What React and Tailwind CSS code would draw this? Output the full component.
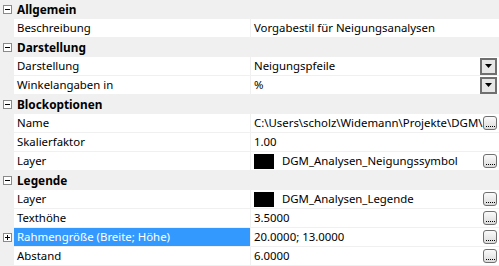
import React from "react";

const rows = [
  { type: "group", label: "Allgemein" },
  { label: "Beschreibung", value: "Vorgabestil für Neigungsanalysen" },
  { type: "group", label: "Darstellung" },
  { label: "Darstellung", value: "Neigungspfeile", button: "drop" },
  { label: "Winkelangaben in", value: "%", button: "drop" },
  { type: "group", label: "Blockoptionen" },
  { label: "Name", value: "C:\\Users\\scholz\\Widemann\\Projekte\\DGM\\Blöcke\\Neigungspfeil.dwg", button: "dots" },
  { label: "Skalierfaktor", value: "1.00" },
  { label: "Layer", value: "DGM_Analysen_Neigungssymbol", swatch: true, button: "dots" },
  { type: "group", label: "Legende" },
  { label: "Layer", value: "DGM_Analysen_Legende", swatch: true, button: "dots" },
  { label: "Texthöhe", value: "3.5000", button: "dots" },
  { label: "Rahmengröße (Breite; Höhe)", value: "20.0000; 13.0000", button: "dots", selected: true, expandable: true },
  { label: "Abstand", value: "6.0000", button: "dots" },
];

function Toggle({ plus }) {
  return (
    <div className="relative w-[9px] h-[9px] border border-[#8a8a8a] bg-white">
      <div className="absolute left-[1px] top-[3px] w-[5px] h-px bg-black" />
      {plus && <div className="absolute left-[3px] top-[1px] w-px h-[5px] bg-black" />}
    </div>
  );
}

function DropButton() {
  return (
    <div className="w-[17px] h-[17px] border-2 border-[#6f6f6f] bg-[#e6e6e6] flex items-center justify-center shrink-0">
      <svg width="7" height="4" viewBox="0 0 7 4">
        <path d="M0 0h7L3.5 4z" fill="#000" />
      </svg>
    </div>
  );
}

function DotsButton() {
  return (
    <div className="w-[14px] h-[14px] rounded-[3px] border border-[#707070] bg-gradient-to-b from-[#fafafa] to-[#dcdcdc] flex items-end justify-center pb-[2px] shrink-0">
      <div className="flex gap-px">
        <div className="w-px h-px bg-black" />
        <div className="w-px h-px bg-black" />
        <div className="w-px h-px bg-black" />
        <div className="w-px h-px bg-black" />
        <div className="w-px h-px bg-black" />
      </div>
    </div>
  );
}

export default function App() {
  return (
    <div
      className="w-[499px] h-[266px] bg-[#f0f0f0] overflow-hidden text-[11.4px] leading-[16px] text-black"
      style={{ fontFamily: "'Noto Sans', 'DejaVu Sans', sans-serif" }}
    >
      {rows.map((r, i) =>
        r.type === "group" ? (
          <div key={i} className="h-[19px] flex items-center">
            <div className="w-[14px] pl-[3px] flex items-center">
              <Toggle />
            </div>
            <span className="pl-[3px] font-bold text-[11.8px] pb-[1px]">{r.label}</span>
          </div>
        ) : (
          <div key={i} className="h-[19px] flex pb-px">
            <div className="w-[14px] pl-[3px] flex items-center">
              {r.expandable && <Toggle plus />}
            </div>
            <div
              className={
                "w-[236px] flex items-center pl-[3px] " +
                (r.selected ? "bg-[#3399ff] text-white" : "bg-white")
              }
            >
              {r.label}
            </div>
            <div className="w-px" />
            <div className="flex-1 bg-white flex items-center pr-[2px] overflow-hidden">
              <div className="flex-1 flex items-center pl-[3px] overflow-hidden whitespace-nowrap">
                {r.swatch && <div className="w-[20px] h-[15px] bg-black mr-[8px] shrink-0" />}
                <span>{r.value}</span>
              </div>
              {r.button === "drop" && <DropButton />}
              {r.button === "dots" && <DotsButton />}
            </div>
          </div>
        )
      )}
    </div>
  );
}
